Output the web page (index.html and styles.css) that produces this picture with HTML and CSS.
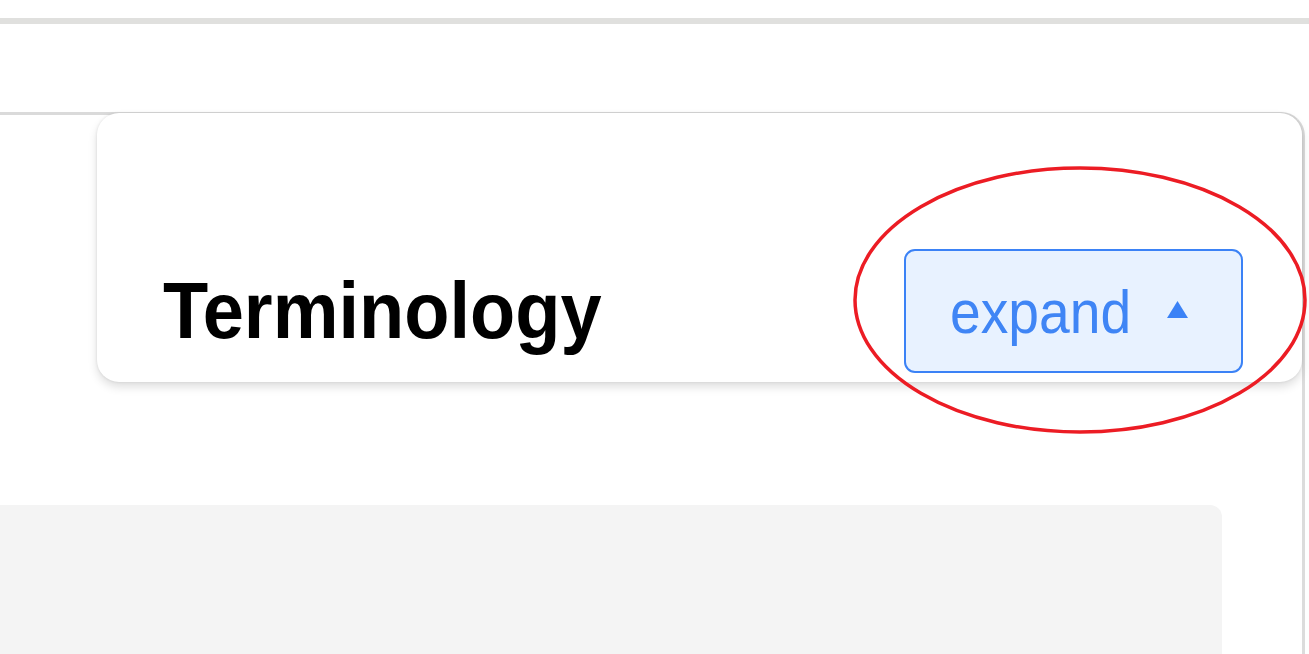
FILE: index.html
```html
<!DOCTYPE html>
<html lang="en">
<head>
<meta charset="utf-8">
<title>Terminology</title>
<link rel="stylesheet" href="styles.css">
</head>
<body>
  <div class="topbar"></div>
  <main class="panel">
    <section class="card">
      <h2 class="title"><span class="title-text">Terminology</span></h2>
      <button class="expand" type="button">
        <span class="expand-label">expand</span>
        <svg class="caret" width="21" height="17" viewBox="0 0 21 17" aria-hidden="true">
          <polygon points="10.5,0 21,17 0,17" fill="#3b82f6"/>
        </svg>
      </button>
    </section>
    <div class="content-box"></div>
  </main>
  <svg class="annotation" width="470" height="280" viewBox="0 0 470 280" aria-hidden="true">
    <ellipse cx="235" cy="140" rx="225" ry="132" fill="none" stroke="#ec1c24" stroke-width="3.5"/>
  </svg>
</body>
</html>
```

FILE: styles.css
```css
html, body {
  margin: 0;
  padding: 0;
  background: #ffffff;
  overflow: hidden;
  width: 1309px;
  height: 654px;
}

body {
  position: relative;
  font-family: "Liberation Sans", Arial, sans-serif;
}

.topbar {
  height: 18px;
  border-bottom: 6px solid #e0e0de;
  background: #ffffff;
}

.panel {
  margin-top: 88px;
  margin-left: -30px;
  width: 1335px;
  height: 700px;
  box-sizing: border-box;
  border-top: 3px solid #dadada;
  border-right: 3px solid #dcdcdc;
  border-top-right-radius: 24px;
  display: flex;
  flex-direction: column;
}

.card {
  margin-left: 127px;
  margin-top: -2px;
  height: 269px;
  box-sizing: border-box;
  background: #ffffff;
  border-radius: 22px;
  box-shadow: 0 5px 10px rgba(0, 0, 0, 0.13), 0 0 3px rgba(0, 0, 0, 0.10);
  display: flex;
  align-items: flex-end;
  justify-content: space-between;
  padding: 0 59px 9px 66px;
}

.title {
  margin: 0 0 22px 0;
  font-size: 80px;
  line-height: 80px;
  font-weight: 700;
  color: #000000;
}

.title-text {
  display: inline-block;
  transform: scaleX(0.925);
  transform-origin: left center;
}

.expand {
  width: 339px;
  height: 124px;
  box-sizing: border-box;
  display: flex;
  align-items: center;
  padding: 3px 53px 0 44px;
  margin: 0;
  background: #e8f2ff;
  border: 2px solid #3b82f6;
  border-radius: 11px;
  font-family: "Liberation Sans", Arial, sans-serif;
  cursor: pointer;
}

.expand-label {
  display: inline-block;
  font-size: 61px;
  line-height: 61px;
  color: #3f85f5;
  transform: scaleX(0.905);
  transform-origin: left center;
}

.caret {
  margin-left: auto;
  margin-bottom: 6px;
  display: block;
}

.content-box {
  margin-top: 123px;
  margin-left: 0;
  width: 1252px;
  flex: 1;
  background: #f4f4f4;
  border-top-right-radius: 12px;
}

.annotation {
  position: absolute;
  left: 845px;
  top: 160px;
}
```
